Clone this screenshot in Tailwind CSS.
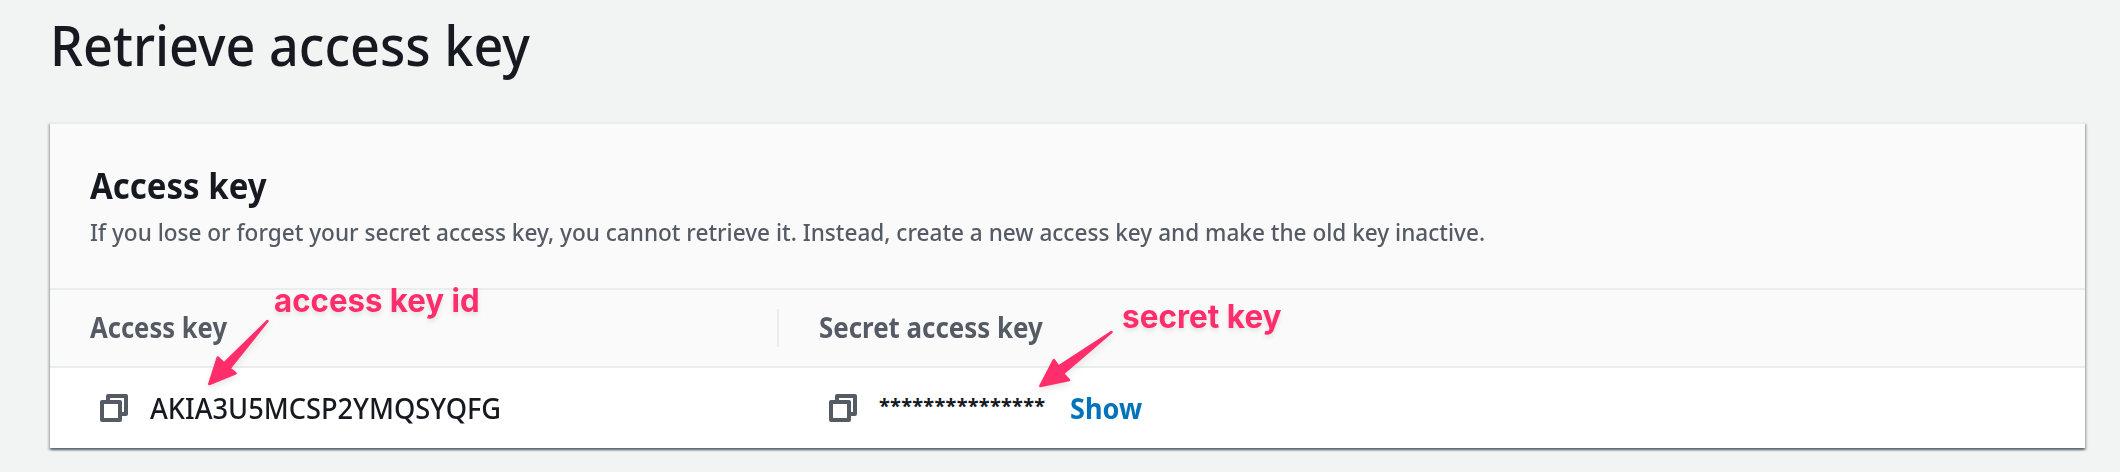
<!DOCTYPE html>
<html lang="en">
<head>
<meta charset="utf-8">
<title>Retrieve access key</title>
<script src="https://cdn.jsdelivr.net/npm/@tailwindcss/browser@4"></script>
</head>
<body class="relative h-[472px] overflow-hidden bg-[#f2f3f3] px-[50px] pt-2 pr-[35px] font-['Noto_Sans',sans-serif] text-[#16191f]">
  <h1 class="w-max origin-left scale-x-[.9316] whitespace-nowrap text-[56px] leading-[72px] font-medium">Retrieve access key</h1>

  <section class="mt-[42px] flex h-[326px] flex-col border-t-2 border-[#eaeded] bg-white shadow-[0_2px_2px_0_rgba(0,28,36,0.5),2px_2px_2px_0_rgba(0,28,36,0.15),-2px_2px_2px_0_rgba(0,28,36,0.15)]">
    <header class="h-[166px] border-b-2 border-[#eaeded] bg-[#fafafa] pt-10 pl-10">
      <h2 class="w-max origin-left scale-x-[.916] whitespace-nowrap text-[36px] leading-[44px] font-bold">Access key</h2>
      <p class="mt-1.5 w-max origin-left scale-x-[.9405] whitespace-nowrap text-2xl leading-9 font-medium text-[#545b64]">If you lose or forget your secret access key, you cannot retrieve it. Instead, create a new access key and make the old key inactive.</p>
    </header>

    <div class="flex h-[78px] items-center border-b-2 border-[#eaeded] bg-[#fafafa] text-[28px] leading-9 font-bold text-[#545b64]">
      <div class="flex h-[38px] w-[729px] items-center border-r-2 border-[#eaeded] pl-10">
        <span class="origin-left scale-x-[.914] whitespace-nowrap pb-0.5">Access key</span>
      </div>
      <div class="pl-10">
        <span class="block origin-left scale-x-[.925] whitespace-nowrap pb-0.5">Secret access key</span>
      </div>
    </div>

    <div class="flex h-20 items-center text-[28px] leading-9">
      <div class="flex w-[729px] items-center gap-[22px] pl-[50px]">
        <svg class="size-7" viewBox="0 0 28 28" fill="none" stroke="#545b64" stroke-width="4" stroke-linejoin="round"><path d="M2 8h18v18H2z"/><path d="M8 8V2h18v18h-6"/></svg>
        <span class="origin-left scale-x-[.972] whitespace-nowrap pb-px font-medium">AKIA3U5MCSP2YMQSYQFG</span>
      </div>
      <div class="flex items-center pl-[50px]">
        <svg class="size-7" viewBox="0 0 28 28" fill="none" stroke="#545b64" stroke-width="4" stroke-linejoin="round"><path d="M2 8h18v18H2z"/><path d="M8 8V2h18v18h-6"/></svg>
        <span class="ml-[22px] w-[191px] whitespace-nowrap pb-[5px] text-xl leading-9 font-bold tracking-[.25px]">***************</span>
        <a class="origin-left scale-x-[.967] whitespace-nowrap pb-px font-bold text-[#0073bb]">Show</a>
      </div>
    </div>
  </section>

  <!-- Annotations -->
  <div class="absolute top-[281px] left-[274px] origin-left scale-x-[.976] whitespace-nowrap font-['Inter',sans-serif] text-[32px] leading-10 font-bold text-[#ff2d6b] text-shadow-[0_3px_5px_rgba(0,0,0,0.1)]">access key id</div>
  <div class="absolute top-[297px] left-[1122px] origin-left scale-x-[.985] whitespace-nowrap font-['Inter',sans-serif] text-[32px] leading-10 font-bold text-[#ff2d6b] text-shadow-[0_3px_5px_rgba(0,0,0,0.1)]">secret key</div>
  <svg class="absolute top-0 left-0 h-[472px] w-[2120px] drop-shadow-[0_3px_3px_rgba(0,0,0,0.1)]" viewBox="0 0 2120 472" fill="#ff2d6b" stroke="#ff2d6b" stroke-width="2.5" stroke-linejoin="round">
    <path d="M209.3 384L217.8 357.5L224 363.5L267.5 321L229.5 368.5L235.5 373.3Z"/>
    <path d="M1040.3 386L1053.8 360L1058.5 366.5L1111.5 332L1063 373.5L1069 380Z"/>
  </svg>
</body>
</html>
